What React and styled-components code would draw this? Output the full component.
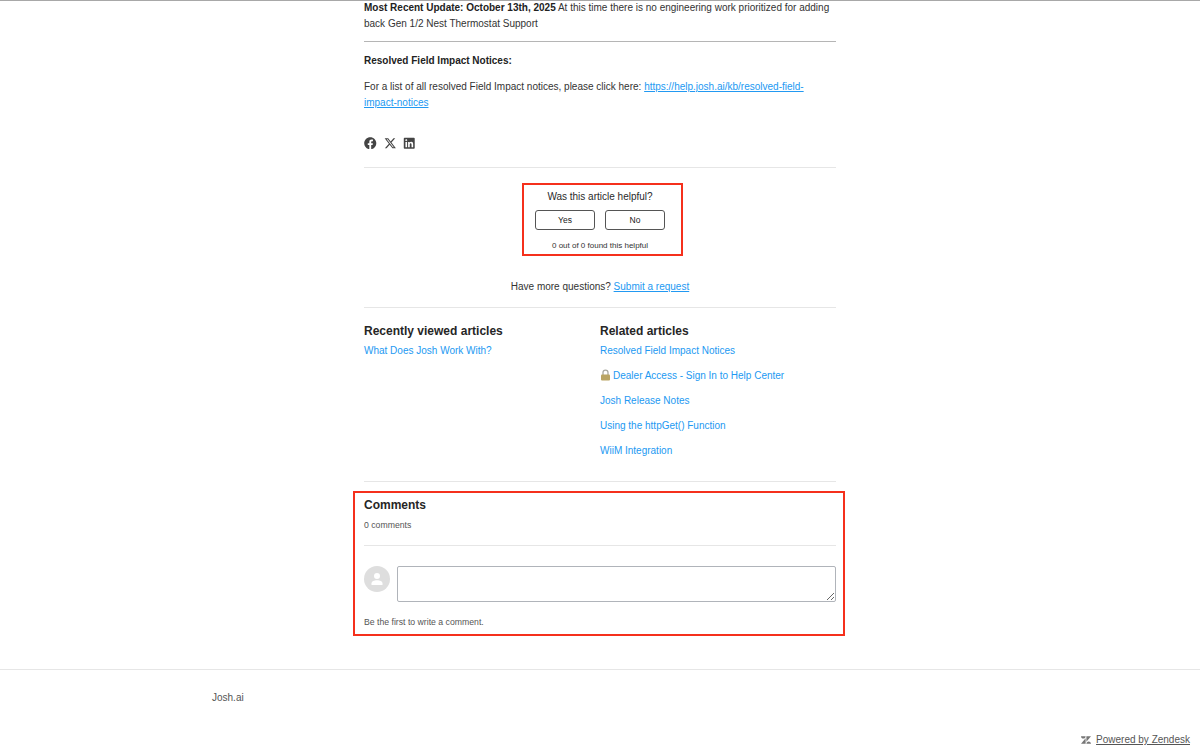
import * as React from 'react';
import styled, { createGlobalStyle } from 'styled-components';
import { FaFacebook, FaLinkedin } from 'react-icons/fa';
import { FaXTwitter } from 'react-icons/fa6';
import { SiZendesk } from 'react-icons/si';

const GlobalStyle = createGlobalStyle`
  html, body {
    margin: 0;
    padding: 0;
    background: #fff;
    overflow: hidden;
  }
  body {
    font-family: "Liberation Sans", Arial, sans-serif;
    color: #2f3133;
  }
`;

const Page = styled.div`
  height: 750px;
  box-sizing: border-box;
  border-top: 1px solid #a8a8a8;
  overflow: hidden;
`;

const Article = styled.main`
  width: 472px;
  margin: 0 auto;
`;

const Paragraph = styled.p`
  margin: ${(p) => p.$margin || '0'};
  font-size: 10px;
  line-height: 16px;
  color: #333;

  strong {
    color: #222;
  }
`;

const Link = styled.a`
  color: #2299f2;
  text-decoration: ${(p) => (p.$underline ? 'underline' : 'none')};
  cursor: pointer;
`;

const Rule = styled.hr`
  border: 0;
  height: 1px;
  margin: ${(p) => p.$margin || '0'};
  background: ${(p) => p.$color || '#e6e6e6'};
`;

const ShareRow = styled.div`
  display: flex;
  align-items: center;
  gap: 7px;
  height: 14px;
  margin-top: 25px;
  color: #444;
  font-size: 12.5px;

  svg {
    display: block;
  }
`;

const VoteBlock = styled.div`
  display: flex;
  flex-direction: column;
  align-items: center;
  box-sizing: border-box;
  width: 161px;
  height: 73px;
  margin: 15px 0 0 158px;
  padding: 4px 5px 0 0;
  border: 2px solid #f5301c;
`;

const VoteTitle = styled.div`
  font-size: 10px;
  line-height: 16px;
  color: #2a2a2a;
`;

const VoteButtons = styled.div`
  display: flex;
  gap: 10px;
  margin-top: 5px;
`;

const VoteButton = styled.button`
  width: 60px;
  height: 20px;
  padding: 0;
  box-sizing: border-box;
  background: #fff;
  border: 1px solid #555;
  border-radius: 3px;
  font-family: inherit;
  font-size: 8.5px;
  color: #222;
`;

const VoteCount = styled.div`
  margin-top: 10px;
  font-size: 8px;
  line-height: 12px;
  color: #333;
`;

const MoreQuestions = styled.div`
  margin-top: 23px;
  text-align: center;
  font-size: 10px;
  line-height: 16px;
  color: #333;
`;

const RelatedGrid = styled.section`
  display: grid;
  grid-template-columns: 236px 236px;
  margin-top: 15px;
`;

const ColumnTitle = styled.h3`
  margin: 0 0 4px;
  font-size: 12px;
  line-height: 16px;
  font-weight: 700;
  color: #262626;
`;

const ArticleList = styled.ul`
  list-style: none;
  margin: 0;
  padding: 0;
  display: flex;
  flex-direction: column;
  gap: 9px;
  font-size: 10px;
  line-height: 16px;
`;

const LockIcon = styled.svg`
  width: 11px;
  height: 12px;
  margin-right: 2px;
  vertical-align: -2px;
`;

const CommentsBlock = styled.section`
  box-sizing: border-box;
  height: 145px;
  margin: 9px -9px 0 -11px;
  padding: 3px 7px 0 9px;
  border: 2px solid #f5301c;
`;

const CommentsTitle = styled.h2`
  margin: 0;
  font-size: 12px;
  line-height: 18px;
  font-weight: 700;
  color: #262626;
`;

const CommentsCount = styled.div`
  margin-top: 5px;
  font-size: 8.7px;
  line-height: 12px;
  color: #555;
`;

const CommentForm = styled.div`
  display: flex;
  gap: 7px;
  margin-top: 20px;
`;

const Avatar = styled.div`
  flex: none;
  display: flex;
  align-items: center;
  justify-content: center;
  width: 26px;
  height: 26px;
  border-radius: 50%;
  background: #dedede;
`;

const CommentInput = styled.textarea`
  flex: 1;
  display: block;
  box-sizing: border-box;
  height: 36px;
  padding: 4px;
  border: 1px solid #b0b4ba;
  border-radius: 2px;
  background: #fff;
  outline: none;
`;

const CommentHint = styled.div`
  margin-top: 14px;
  font-size: 8.7px;
  line-height: 12px;
  color: #555;
`;

const Footer = styled.footer`
  margin-top: 33px;
  border-top: 1px solid #e6e6e6;
`;

const FooterInner = styled.div`
  padding: 21px 0 0 212px;
  font-size: 10px;
  line-height: 14px;
  color: #555;
`;

const PoweredRow = styled.div`
  display: flex;
  align-items: center;
  justify-content: flex-end;
  gap: 5px;
  margin-top: 28px;
  padding-right: 10px;
  font-size: 10px;
  line-height: 14px;
  color: #555;

  a {
    color: inherit;
    text-decoration: underline;
  }
`;

const relatedLinks = ['Josh Release Notes', 'Using the httpGet() Function', 'WiiM Integration'];

const App = () => (
  <Page>
    <GlobalStyle />
    <Article>
      <Paragraph $margin="-1px 0 0">
        <strong>Most Recent Update: October 13th, 2025</strong> At this time there is no engineering
        work prioritized for adding back Gen 1/2 Nest Thermostat Support
      </Paragraph>
      <Rule $margin="9px 0 11px" $color="#b5b5b5" />
      <Paragraph>
        <strong>Resolved Field Impact Notices:</strong>
      </Paragraph>
      <Paragraph $margin="10px 0 0">
        For a list of all resolved Field Impact notices, please click here:{' '}
        <Link $underline>https://help.josh.ai/kb/resolved-field-impact-notices</Link>
      </Paragraph>

      <ShareRow>
        <FaFacebook />
        <FaXTwitter />
        <FaLinkedin />
      </ShareRow>
      <Rule $margin="17px 0 0" />

      <VoteBlock>
        <VoteTitle>Was this article helpful?</VoteTitle>
        <VoteButtons>
          <VoteButton>Yes</VoteButton>
          <VoteButton>No</VoteButton>
        </VoteButtons>
        <VoteCount>0 out of 0 found this helpful</VoteCount>
      </VoteBlock>

      <MoreQuestions>
        Have more questions? <Link $underline>Submit a request</Link>
      </MoreQuestions>
      <Rule $margin="12px 0 0" />

      <RelatedGrid>
        <div>
          <ColumnTitle>Recently viewed articles</ColumnTitle>
          <ArticleList>
            <li>
              <Link>What Does Josh Work With?</Link>
            </li>
          </ArticleList>
        </div>
        <div>
          <ColumnTitle>Related articles</ColumnTitle>
          <ArticleList>
            <li>
              <Link>Resolved Field Impact Notices</Link>
            </li>
            <li>
              <Link>
                <LockIcon viewBox="0 0 11 12">
                  <path d="M3 6V3.6a2.5 2.5 0 0 1 5 0V6" fill="none" stroke="#a9a9a0" strokeWidth="1.3" />
                  <rect x="1" y="5.5" width="9" height="6" rx="1" fill="#b9a463" />
                </LockIcon>
                Dealer Access - Sign In to Help Center
              </Link>
            </li>
            {relatedLinks.map((title) => (
              <li key={title}>
                <Link>{title}</Link>
              </li>
            ))}
          </ArticleList>
        </div>
      </RelatedGrid>

      <Rule $margin="22px 0 0" />

      <CommentsBlock>
        <CommentsTitle>Comments</CommentsTitle>
        <CommentsCount>0 comments</CommentsCount>
        <Rule $margin="14px 0 0" />
        <CommentForm>
          <Avatar>
            <svg width="14" height="14" viewBox="0 0 14 14">
              <circle cx="7" cy="4" r="3" fill="#fff" />
              <path d="M1.5 13v-1.6C1.5 9.3 4 8.2 7 8.2s5.5 1.1 5.5 3.2V13z" fill="#fff" />
            </svg>
          </Avatar>
          <CommentInput />
        </CommentForm>
        <CommentHint>Be the first to write a comment.</CommentHint>
      </CommentsBlock>
    </Article>

    <Footer>
      <FooterInner>Josh.ai</FooterInner>
      <PoweredRow>
        <SiZendesk size={10} color="#777" />
        <a>Powered by Zendesk</a>
      </PoweredRow>
    </Footer>
  </Page>
);

export default App;
